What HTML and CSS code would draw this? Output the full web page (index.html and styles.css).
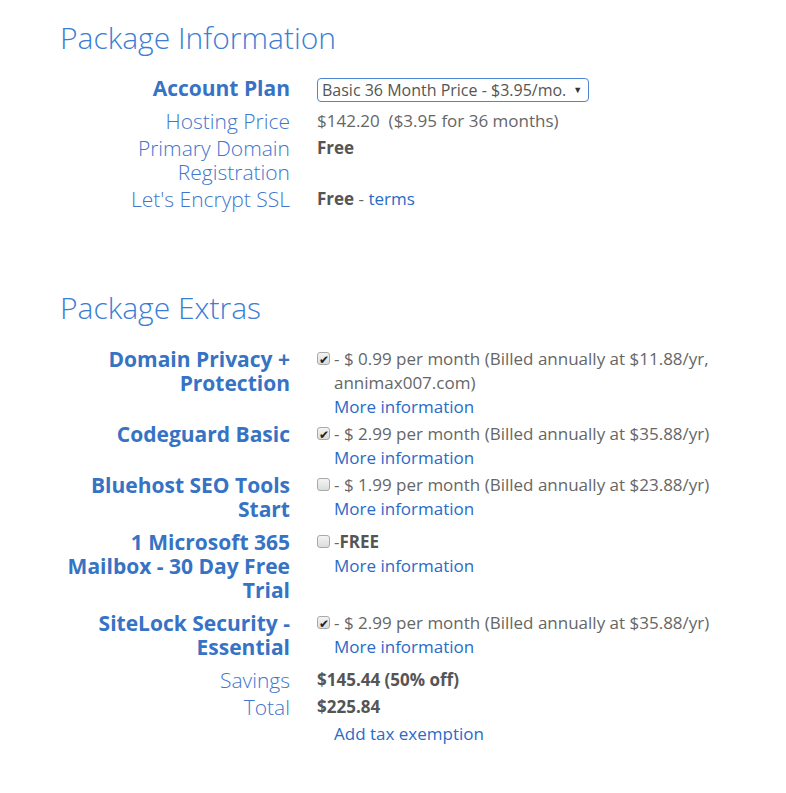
FILE: index.html
```html
<!DOCTYPE html>
<html lang="en">
<head>
    <meta charset="UTF-8">
    <meta name="viewport" content="width=device-width, initial-scale=1.0">
    <title>Package Information</title>
    <link rel="stylesheet" href="styles.css">
</head>
<body>
    <div class="page">
        <section class="package">
            <h2>Package Information</h2>
            <div class="rows">
                <div class="label strong">Account Plan</div>
                <div class="value">
                    <div class="select">Basic 36 Month Price - $3.95/mo.<span class="arrow">&#9660;</span></div>
                </div>

                <div class="label">Hosting Price</div>
                <div class="value">$142.20&nbsp; ($3.95 for 36 months)</div>

                <div class="label">Primary Domain Registration</div>
                <div class="value"><b>Free</b></div>

                <div class="label">Let's Encrypt SSL</div>
                <div class="value"><b>Free</b> - <a href="#">terms</a></div>
            </div>
        </section>

        <section class="package extras">
            <h2>Package Extras</h2>
            <div class="rows">
                <div class="label strong">Domain Privacy + Protection</div>
                <div class="value check">
                    <span class="box checked"></span>
                    <div>
                        - $ 0.99 per month (Billed annually at $11.88/yr, annimax007.com)<br>
                        <a href="#">More information</a>
                    </div>
                </div>

                <div class="label strong">Codeguard Basic</div>
                <div class="value check">
                    <span class="box checked"></span>
                    <div>
                        - $ 2.99 per month (Billed annually at $35.88/yr)<br>
                        <a href="#">More information</a>
                    </div>
                </div>

                <div class="label strong">Bluehost SEO Tools Start</div>
                <div class="value check">
                    <span class="box"></span>
                    <div>
                        - $ 1.99 per month (Billed annually at $23.88/yr)<br>
                        <a href="#">More information</a>
                    </div>
                </div>

                <div class="label strong">1 Microsoft 365 Mailbox - 30 Day Free Trial</div>
                <div class="value check">
                    <span class="box"></span>
                    <div>
                        -<b>FREE</b><br>
                        <a href="#">More information</a>
                    </div>
                </div>

                <div class="label strong">SiteLock Security - Essential</div>
                <div class="value check">
                    <span class="box checked"></span>
                    <div>
                        - $ 2.99 per month (Billed annually at $35.88/yr)<br>
                        <a href="#">More information</a>
                    </div>
                </div>

                <div class="label">Savings</div>
                <div class="value"><b>$145.44 (50% off)</b></div>

                <div class="label">Total</div>
                <div class="value">
                    <b>$225.84</b>
                    <a class="tax" href="#">Add tax exemption</a>
                </div>
            </div>
        </section>
    </div>
</body>
</html>
```

FILE: styles.css
```css
* {
    margin: 0;
    padding: 0;
    box-sizing: border-box;
}

body {
    font-family: 'Open Sans', sans-serif;
    background: #fff;
    color: #666;
}

.page {
    padding: 18px 0 40px 60px;
}

.package h2 {
    font-size: 30px;
    font-weight: 300;
    color: #3c7dd4;
    line-height: 40px;
    margin-bottom: 18px;
}

.extras {
    margin-top: 77px;
}

.extras h2 {
    margin-bottom: 19px;
}

.rows {
    display: grid;
    grid-template-columns: 230px 410px;
    column-gap: 27px;
    row-gap: 3px;
}

.label {
    font-size: 21px;
    font-weight: 300;
    line-height: 24px;
    color: #4176cc;
    text-align: right;
}

/* bold labels sit a little looser than the light ones */
.label.strong {
    font-weight: 700;
    color: #3673c4;
    padding-bottom: 6px;
}

.value {
    font-size: 17px;
    line-height: 24px;
    color: #666;
}

.value b {
    font-weight: 700;
    color: #555;
}

.value a {
    color: #2a6ac8;
    text-decoration: none;
}

.tax {
    display: block;
    margin: 3px 0 0 17px;
}

.select {
    display: inline-flex;
    align-items: center;
    vertical-align: top;
    height: 24px;
    margin-top: 2px;
    padding: 0 6px 0 4px;
    border: 1px solid #4f86d3;
    border-radius: 4px;
    color: #555;
    font-size: 16px;
    white-space: nowrap;
}

.arrow {
    font-size: 9px;
    margin-left: 7px;
    color: #333;
}

.check {
    display: flex;
    align-items: flex-start;
}

.box {
    flex: none;
    width: 13px;
    height: 13px;
    margin: 5px 4px 0 0;
    border: 1px solid #a9a9a9;
    border-radius: 3px;
    background: linear-gradient(#f4f4f4, #dcdcdc);
    position: relative;
}

.box.checked::after {
    content: "\2714";
    position: absolute;
    left: 1px;
    top: -5px;
    font-size: 12px;
    color: #222;
}
```
